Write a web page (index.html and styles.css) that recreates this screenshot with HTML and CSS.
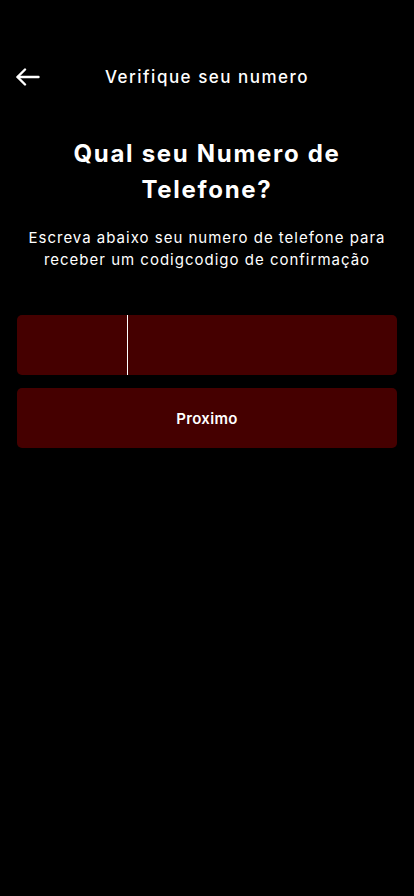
FILE: index.html
```html
<!DOCTYPE html>
<html lang="pt">
<head>
<meta charset="utf-8">
<link rel="stylesheet" href="styles.css">
</head>
<body>
<div class="screen">
  <header class="topbar">
    <button class="back" aria-label="Voltar">
      <svg width="24" height="18" viewBox="0 0 24 18" fill="none" stroke="#fff" stroke-width="2.4" stroke-linecap="round" stroke-linejoin="round">
        <path d="M22.5 9H1.8"/>
        <path d="M9 1.5L1.5 9L9 16.5"/>
      </svg>
    </button>
    <h1 class="topbar-title">Verifique seu numero</h1>
  </header>
  <main class="content">
    <h2 class="heading">Qual seu Numero de Telefone?</h2>
    <p class="sub">Escreva abaixo seu numero de telefone para receber um codigcodigo de confirmação</p>
    <div class="phone-field">
      <div class="prefix"></div>
      <div class="number"></div>
    </div>
    <button class="next">Proximo</button>
  </main>
</div>
</body>
</html>
```
FILE: styles.css
```css
* { box-sizing: border-box; }
html, body { margin: 0; padding: 0; background: #000; }
body { font-family: "Inter", "Liberation Sans", sans-serif; color: #fff; }
.screen { width: 414px; min-height: 896px; background: #000; padding-top: 52px; }
.topbar {
  position: relative;
  height: 48px;
  display: flex;
  align-items: center;
  justify-content: center;
}
.back {
  position: absolute;
  left: 16px;
  top: 16px;
  background: none;
  border: 0;
  padding: 0;
  width: 24px;
  height: 18px;
  display: flex;
}
.topbar-title {
  margin: 0;
  padding-top: 2px;
  font-size: 17px;
  font-weight: 500;
  letter-spacing: 1.5px;
}
.content { padding: 36px 17px 0; display: flex; flex-direction: column; align-items: stretch; }
.heading {
  margin: 0 auto;
  width: 320px;
  text-align: center;
  font-size: 24px;
  line-height: 36px;
  font-weight: 700;
  letter-spacing: 1.7px;
}
.sub {
  margin: 19px 0 0;
  text-align: center;
  font-size: 15px;
  line-height: 22px;
  font-weight: 400;
  letter-spacing: 1px;
}
.phone-field {
  margin-top: 44px;
  height: 60px;
  background: #450000;
  border-radius: 5px;
  display: flex;
  overflow: hidden;
}
.prefix { width: 111px; border-right: 1px solid #fff; }
.number { flex: 1; }
.next {
  margin-top: 13px;
  height: 60px;
  border: 0;
  border-radius: 5px;
  background: #450000;
  color: #fff;
  font-family: inherit;
  font-size: 15px;
  font-weight: 600;
  letter-spacing: 0.3px;
}
```
